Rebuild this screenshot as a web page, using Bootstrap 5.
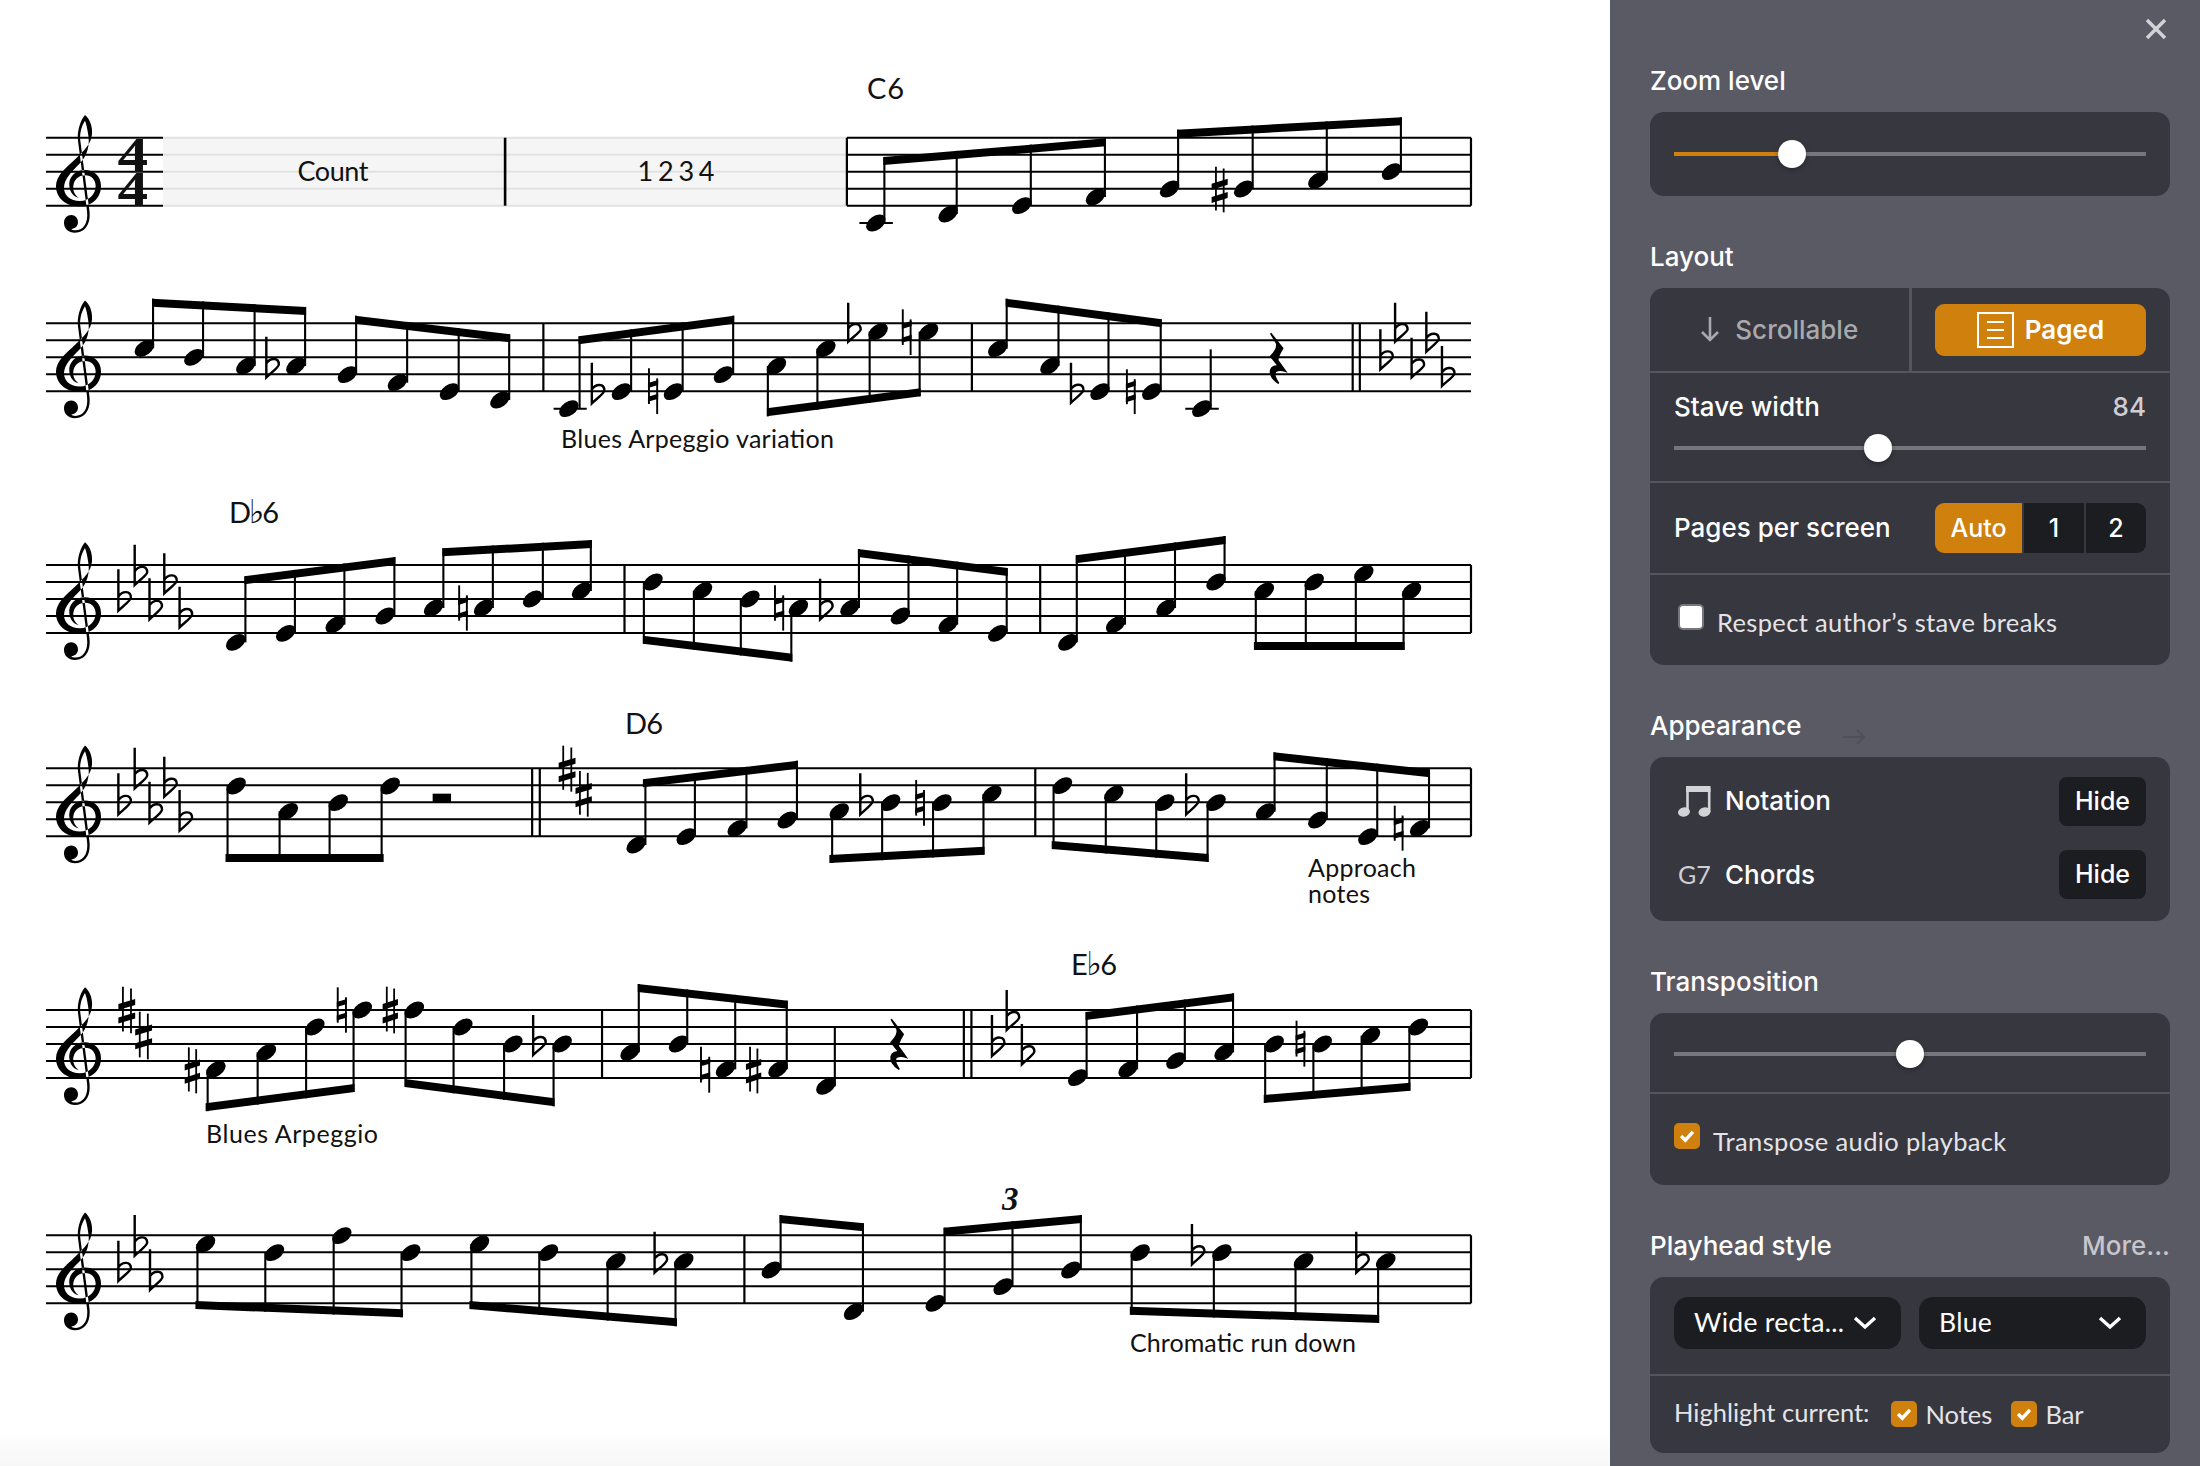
<!DOCTYPE html>
<html lang="en">
<head>
<meta charset="utf-8">
<title>Score settings</title>
<link href="https://cdn.jsdelivr.net/npm/bootstrap@5.3.0/dist/css/bootstrap.min.css" rel="stylesheet">
<style>
html,body{margin:0;background:#fff;font-family:"Lato","Liberation Sans",sans-serif;overflow:hidden}
.app-shell{width:2200px;height:1466px}
.score-pane{width:1610px;height:1466px;flex:none;background:linear-gradient(to bottom,#fff 1430px,#f7f7f7 1466px)}
.score-pane svg{display:block}
.score-pane text{font-family:"Lato","Liberation Sans",sans-serif;fill:#111}
.side-pane{width:590px;height:1466px;flex:none;background:#5a5a65;padding:0 30px 0 40px;color:#fff}
.close-row{height:66px;padding-top:18px}
.close-mark{margin-right:3px}
.sect-title{font-family:"Inter","Lato",sans-serif;font-size:26px;line-height:30px;font-weight:500;color:#fff;margin:46px 0 16px}
.first-title{margin-top:0}
.panel-card{background:#373740;border-radius:14px;overflow:hidden}
.card-row{border-bottom:2px solid #55555e;padding:0 24px}
.card-row:last-child{border-bottom:0}
.h-84{height:83.5px}
.form-range{height:28px;display:block}
.form-range::-webkit-slider-runnable-track{height:4px;background:linear-gradient(to right,#d0800c var(--fill,0%),#76767b var(--fill,0%));border-radius:0}
.form-range::-webkit-slider-thumb{width:28px;height:28px;margin-top:-12px;background:#fff;border-radius:50%;box-shadow:0 2px 5px rgba(0,0,0,.3);-webkit-appearance:none;appearance:none}
.mode-row{height:85px;padding:0}
.mode-left{width:261.5px;height:100%;border-right:3px solid #55555e;color:#a9a9ad;font-family:"Inter","Lato",sans-serif;font-size:26px;font-weight:500;gap:15px}
.mode-right{padding:16px 24px 0 23.5px;flex:1}
.btn-amber{background:#d0800c;color:#fff;border:0;font-family:"Inter","Lato",sans-serif;font-size:26px;font-weight:600;height:52px;border-radius:9px;padding:0;gap:11px}
.btn-amber:hover{background:#d0800c;color:#fff}
.stave-row{height:110px;padding-top:19px}
.row-label{font-family:"Inter","Lato",sans-serif;font-size:26px;line-height:30px;font-weight:500;color:#fff}
.row-val{color:#cfcfd3}
.stave-row .form-range{margin-top:12px}
.pages-row{height:92px}
.seg-group{width:211px;height:50px}
.seg-group .btn{background:#1c1d20;color:#fff;border:0;border-radius:0;font-family:"Inter","Lato",sans-serif;font-size:25px;font-weight:500;padding:0;line-height:50px;height:50px;width:60px;flex:none}
.seg-group.btn-group .btn+.btn{margin-left:2px}
.seg-group .btn:first-child{background:#d0800c;width:87px;border-radius:9px 0 0 9px}
.seg-group.btn-group .btn:last-child{border-radius:0 9px 9px 0}
.check-row{gap:13px;color:#e4e4e7;font-size:25.5px;line-height:30px;letter-spacing:.35px}
.form-check-input.tick-box{width:26px;height:26px;margin:0;flex:none;background-color:#fff;border:2px solid #76767b;border-radius:5px;float:none}
.form-check-input.tick-box:checked{background-color:#d0800c;border-color:#d0800c;background-image:url("data:image/svg+xml,%3csvg xmlns='http://www.w3.org/2000/svg' viewBox='0 0 26 26'%3e%3cpath fill='none' stroke='%23fff' stroke-width='4' d='M6 13l5 5 9-10'/%3e%3c/svg%3e")}
.check-row .tick-box{margin-bottom:6px!important}
.check-row span{margin-top:4px}
.row-one-a{height:90px;padding:0 0 0 28px}
.appear-list{padding:8px 0 9px}
.app-row{height:73.5px;border:0;padding:0 24px 0 28px}
.app-glyph{width:47px;flex:none;color:#cfcfd3;font-size:25px}
.btn-ink{background:#1c1d20;color:#fff;border:0;font-family:"Inter","Lato",sans-serif;font-size:25px;font-weight:500;width:87px;height:49px;border-radius:8px;padding:0}
.btn-ink:hover{background:#1c1d20;color:#fff}
.more-link{color:#c6c6cb;font-family:"Inter","Lato",sans-serif;font-size:26px;line-height:30px;font-weight:500;margin-top:46px}
.pick-btn{background:#1c1d20;color:#fff;border:0;border-radius:14px;height:52px;font-size:26.5px;letter-spacing:.3px;padding:0 24px 0 20px;text-align:left}
.pick-btn:hover{background:#1c1d20;color:#fff}
.light-arrow{margin:0 0 12px 40px}
.transp-top{height:81.5px;padding-top:3px}
.transp-bot{height:90.5px}
.play-top{height:99px;padding-top:20px;gap:18px}
.play-bot{height:77.5px;font-size:25.5px;color:#e4e4e7}
.gap-label{margin:-5px 22px 0 0}
.tick-label{margin-left:8px}
.tick-space{margin-right:19px}
</style>
</head>
<body>
<div class="app-shell d-flex">
  <main class="score-pane">
    <svg id="score" width="1610" height="1466" viewBox="0 0 1610 1466" xmlns="http://www.w3.org/2000/svg">
      <g id="music"></g>
      <text x="333" y="181" text-anchor="middle" font-size="27" textLength="71" lengthAdjust="spacing">Count</text>
      <text x="676" y="181" text-anchor="middle" font-size="27" textLength="77" lengthAdjust="spacing">1 2 3 4</text>
      <text x="867" y="99" font-size="29" textLength="37" lengthAdjust="spacing">C6</text>
      <text x="229" y="523" font-size="29" textLength="50" lengthAdjust="spacing">D<tspan font-size="33" style="font-family:'DejaVu Sans',sans-serif">♭</tspan>6</text>
      <text x="625" y="734" font-size="29" textLength="38" lengthAdjust="spacing">D6</text>
      <text x="1071" y="975" font-size="29" textLength="46" lengthAdjust="spacing">E<tspan font-size="33" style="font-family:'DejaVu Sans',sans-serif">♭</tspan>6</text>
      <text x="561" y="448" font-size="25" textLength="273" lengthAdjust="spacing">Blues Arpeggio variation</text>
      <text x="1308" y="877" font-size="25" textLength="108" lengthAdjust="spacing">Approach</text>
      <text x="1308" y="903" font-size="25" textLength="62" lengthAdjust="spacing">notes</text>
      <text x="206" y="1143" font-size="25" textLength="172" lengthAdjust="spacing">Blues Arpeggio</text>
      <text x="1130" y="1352" font-size="25" textLength="226" lengthAdjust="spacing">Chromatic run down</text>
      <text x="1002" y="1210" font-size="33" font-weight="700" font-style="italic" style="font-family:'Liberation Serif',serif">3</text>
      <text transform="translate(117.5 171.5) scale(1.2 1)" font-size="51" font-weight="700" style="font-family:'Liberation Serif',serif">4</text>
      <text transform="translate(117.5 205.5) scale(1.2 1)" font-size="51" font-weight="700" style="font-family:'Liberation Serif',serif">4</text>
    </svg>
  </main>
  <aside class="side-pane">
    <div class="close-row d-flex justify-content-end">
      <svg class="close-mark" width="22" height="22" viewBox="0 0 22 22"><path d="M2 2 L20 20 M20 2 L2 20" stroke="#d3d3d7" stroke-width="3.4" fill="none"/></svg>
    </div>

    <h2 class="sect-title first-title">Zoom level</h2>
    <div class="panel-card">
      <div class="card-row h-84 d-flex align-items-center">
        <input type="range" class="form-range" min="0" max="100" step="any" value="23.4" style="--fill:25%" aria-label="Zoom level">
      </div>
    </div>

    <h2 class="sect-title">Layout</h2>
    <div class="panel-card">
      <div class="card-row mode-row d-flex">
        <div class="mode-left d-flex align-items-center justify-content-center">
          <svg width="20" height="26" viewBox="0 0 20 26"><path d="M10 1 V24 M2 16 L10 24 L18 16" stroke="#a9a9ad" stroke-width="2.6" fill="none"/></svg>
          <span>Scrollable</span>
        </div>
        <div class="mode-right">
          <button type="button" class="btn btn-amber w-100 d-flex align-items-center justify-content-center">
            <svg width="37" height="36" viewBox="0 0 37 36"><rect x="1" y="1" width="35" height="34" fill="none" stroke="#fff" stroke-width="2"/><path d="M10 10 H27 M10 18 H27 M10 26 H27" stroke="#fff" stroke-width="1.8"/></svg>
            <span>Paged</span>
          </button>
        </div>
      </div>
      <div class="card-row stave-row">
        <div class="d-flex justify-content-between row-label"><span>Stave width</span><span class="row-val">84</span></div>
        <input type="range" class="form-range" min="0" max="100" step="any" value="42.8" aria-label="Stave width">
      </div>
      <div class="card-row pages-row d-flex align-items-center justify-content-between">
        <span class="row-label">Pages per screen</span>
        <div class="btn-group seg-group" role="group">
          <button type="button" class="btn">Auto</button>
          <button type="button" class="btn">1</button>
          <button type="button" class="btn">2</button>
        </div>
      </div>
      <div class="card-row row-one-a d-flex align-items-center check-row">
        <input class="form-check-input tick-box" type="checkbox" aria-label="Respect author's stave breaks">
        <span>Respect author’s stave breaks</span>
      </div>
    </div>

    <div class="d-flex">
      <h2 class="sect-title">Appearance</h2>
      <svg class="light-arrow align-self-end" width="24" height="16" viewBox="0 0 24 16"><path d="M1 8 H22 M15 1 L22 8 L15 15" stroke="#4f4f5a" stroke-width="1.8" fill="none"/></svg>
    </div>
    <div class="panel-card appear-list">
      <div class="app-row card-row d-flex align-items-center justify-content-between">
        <div class="d-flex align-items-center">
          <span class="app-glyph d-flex"><svg width="33" height="31" viewBox="0 0 33 31"><path d="M8 0 H32.5 V6 H8Z" fill="#d3d3d7"/><path d="M9.5 2 V26 M31.2 2 V26" stroke="#d3d3d7" stroke-width="2.6"/><ellipse cx="6" cy="26" rx="6" ry="4.6" fill="#d3d3d7" transform="rotate(-12 6 26)"/><ellipse cx="26.5" cy="26" rx="6" ry="4.6" fill="#d3d3d7" transform="rotate(-12 26.5 26)"/></svg></span>
          <span class="row-label">Notation</span>
        </div>
        <button type="button" class="btn btn-ink">Hide</button>
      </div>
      <div class="app-row card-row d-flex align-items-center justify-content-between">
        <div class="d-flex align-items-center">
          <span class="app-glyph">G7</span>
          <span class="row-label">Chords</span>
        </div>
        <button type="button" class="btn btn-ink">Hide</button>
      </div>
    </div>

    <h2 class="sect-title">Transposition</h2>
    <div class="panel-card">
      <div class="card-row transp-top d-flex align-items-center">
        <input type="range" class="form-range" min="0" max="100" step="any" value="50" aria-label="Transposition">
      </div>
      <div class="card-row transp-bot d-flex align-items-center check-row">
        <input class="form-check-input tick-box" type="checkbox" checked aria-label="Transpose audio playback">
        <span>Transpose audio playback</span>
      </div>
    </div>

    <div class="d-flex justify-content-between align-items-start">
      <h2 class="sect-title">Playhead style</h2>
      <a class="more-link text-decoration-none">More...</a>
    </div>
    <div class="panel-card">
      <div class="card-row play-top d-flex">
        <button type="button" class="btn pick-btn d-flex align-items-center justify-content-between" style="width:227px"><span>Wide recta...</span><svg width="24" height="14" viewBox="0 0 24 14"><path d="M2 2 L12 11 L22 2" stroke="#fff" stroke-width="3.4" fill="none"/></svg></button>
        <button type="button" class="btn pick-btn d-flex align-items-center justify-content-between flex-grow-1"><span>Blue</span><svg width="24" height="14" viewBox="0 0 24 14"><path d="M2 2 L12 11 L22 2" stroke="#fff" stroke-width="3.4" fill="none"/></svg></button>
      </div>
      <div class="card-row play-bot d-flex align-items-center">
        <span class="gap-label">Highlight current:</span>
        <input class="form-check-input tick-box" type="checkbox" checked aria-label="Notes"><span class="tick-label tick-space">Notes</span>
        <input class="form-check-input tick-box" type="checkbox" checked aria-label="Bar"><span class="tick-label">Bar</span>
      </div>
    </div>
  </aside>
</div>
<script src="https://cdn.jsdelivr.net/npm/bootstrap@5.3.0/dist/js/bootstrap.bundle.min.js"></script>
<script>
(function(){
  const a=x=>x/1.96, b=x=>800+x/2.24;
  const yA=y=>60+y/3, yC=y=>480+y/3, yE=y=>930+y/3;
  let o='';
  const line=(x1,y1,x2,y2,w,c)=>{o+=`<line x1="${x1}" y1="${y1}" x2="${x2}" y2="${y2}" stroke="${c||'#000'}" stroke-width="${w||2}"/>`};
  const head=(x,y)=>{o+=`<ellipse cx="${x}" cy="${y}" rx="10.9" ry="6.9" transform="rotate(-35 ${x} ${y})"/>`};
  const ledger=(x1,x2,y)=>line(x1,y,x2,y,2);
  const bar=(x,t,w)=>line(x,t,x,t+68,w||2.2);
  const CLEF='M165 45 C178 56 188 76 186 102 C184 132 162 152 137 176 C107 205 78 226 78 258 C78 296 110 319 148 319 C190 319 213 291 213 258 C213 226 189 210 165 210 C135 210 115 232 118 258 C120 278 132 291 146 293 C132 284 127 268 131 252 C135 236 150 226 165 226 C185 226 197 240 197 258 C197 282 178 303 150 303 C120 303 102 285 102 263 C102 237 126 214 150 190 C172 168 181 135 174 100 C172 86 169 72 165 62 C160 70 154 82 152 95 C150 104 150 112 151 122 L178 330 C184 372 165 398 135 398 C115 398 102 385 102 368 C102 354 112 345 124 345 C135 345 144 354 144 366 C144 378 135 386 124 387 C126 390 131 391 136 391 C158 391 176 372 171 332 L144 122 C143 112 143 102 145 92 C148 74 156 55 165 45Z';
  const clef=t=>{o+=`<path d="${CLEF}" transform="translate(30 ${t-37.7}) scale(.3333)"/>`};
  const flat=(x,y1,y2)=>{const h=y2-y1,m=y1+h*.56;o+=`<path d="M${x} ${y1} V${y2} C${x+4} ${y2-4} ${x+12.5} ${y2-10} ${x+12.5} ${m+5} C${x+12.5} ${m-2} ${x+4} ${m-2} ${x} ${m+4}" fill="none" stroke="#000" stroke-width="2.4"/>`};
  const sharp=(x1,x2,y1,y2)=>{const w=x2-x1,h=y2-y1;line(x1+w*.27,y1,x1+w*.27,y2-h*.04,1.8);line(x1+w*.75,y1+h*.04,x1+w*.75,y2,1.8);
    [.33,.62].forEach(f=>{const y=y1+h*f;o+=`<polygon points="${x1},${y+2} ${x2},${y-3} ${x2},${y+3} ${x1},${y+8}"/>`})};
  const natural=(x1,x2,y1,y2)=>{const h=y2-y1;line(x1+1,y1,x1+1,y1+h*.78,1.9);line(x2-1,y1+h*.22,x2-1,y2,1.9);
    [.3,.6].forEach(f=>{const y=y1+h*f;o+=`<polygon points="${x1},${y+1} ${x2},${y-2} ${x2},${y+3} ${x1},${y+6}"/>`})};
  const rest=(x,y)=>{o+=`<path stroke="#000" stroke-width="1.6" transform="translate(${x} ${y})" d="M1 0 L13 15 C10 20 8 24 8 27 L16 38 C10 36 5 37 5 41 C5 44 7 47 9 50 C3 46 0 42 1 37 C2 33 6 32 9 33 L1 23 C5 19 8 14 7 10Z"/>`};
  const G=(heads,stems,bm)=>{
    const th=8,s=(bm[3]-bm[1])/(bm[2]-bm[0]);
    heads.forEach((h,i)=>{const x=stems[i],by=bm[1]+s*(x-bm[0]);
      const up=by<h[1];line(x,h[1],x,up?by:by+th,2.1);head(h[0],h[1])});
    o+=`<polygon points="${bm[0]-1},${bm[1]} ${bm[2]+1},${bm[3]} ${bm[2]+1},${bm[3]+th} ${bm[0]-1},${bm[1]+th}"/>`;
  };
  const g=(fx,fy,hs,st,bm)=>G(hs.map(h=>[fx(h[0]),fy(h[1])]),st.map(fx),[fx(bm[0]),fy(bm[1]),fx(bm[2]),fy(bm[3])]);
  const tops=[137.7,323.3,565,768.3,1010,1235.3];
  const X0=46,X1=1471;
  {const t=tops[0];
   o+=`<rect x="163" y="${t}" width="684" height="68" fill="#f5f5f5"/>`;
   for(let i=0;i<5;i++){const y=t+i*17;line(X0,y,163,y);line(163,y,847,y,2,'#e2e2e2');line(847,y,X1,y)}
  }
  for(let k=1;k<6;k++){for(let i=0;i<5;i++){const y=tops[k]+i*17;line(X0,y,X1,y)}}
  tops.forEach(clef);
  const fl=(f,fy,arr)=>arr.forEach(v=>flat(f(v[0]),fy(v[1]),fy(v[2])));
  const sh=(f,fy,arr)=>arr.forEach(v=>sharp(f(v[0]),f(v[1]),fy(v[2]),fy(v[3])));
  const na=(f,fy,arr)=>arr.forEach(v=>natural(f(v[0]),f(v[1]),fy(v[2]),fy(v[3])));
  bar(a(990),tops[0],2.6);bar(b(105),tops[0]);bar(b(1503),tops[0]);
  ledger(b(133),b(208),yA(489));
  g(b,yA,[[170,489],[332,462],[497,437],[662,411]],[189,351,517,683],[189,291,683,235]);
  g(b,yA,[[828,387],[994,387],[1160,361],[1325,335]],[847,1014,1180,1346],[847,209,1346,172]);
  sh(b,yA,[[922,958,320,457]]);
  g(a,yA,[[283,865],[380,892],[482,918],[580,918]],[300,398,499,598],[300,716,598,741]);
  fl(a,yA,[[522,830,952]]);
  g(a,yA,[[681,944],[779,968],[881,995],[980,1020]],[698,798,899,998],[698,767,998,823]);
  bar(a(1065),tops[1]);
  ledger(a(1085),a(1150),yA(1046));
  g(a,yA,[[1115,1046],[1218,995],[1320,995],[1418,944]],[1136,1237,1338,1437],[1136,829,1437,767]);
  fl(a,yA,[[1160,908,1030]]);na(a,yA,[[1270,1290,925,1062]]);
  G([[a(1522),yA(918)],[b(58),yA(866)],[b(175),yA(815)],[b(288),yA(815)]],[a(1505),b(39),b(156),b(268)],[a(1505),yA(1045),b(268),yA(985)]);
  fl(b,yA,[[108,728,845]]);na(b,yA,[[228,250,748,885]]);
  bar(b(385),tops[1]);
  g(b,yA,[[443,866],[560,918],[672,995],[788,995]],[463,579,691,808],[463,716,808,778]);
  fl(b,yA,[[607,908,1028]]);na(b,yA,[[730,752,928,1062]]);
  ledger(b(863),b(938),yA(1046));
  line(b(920),yA(868),b(920),yA(1046),2.1);head(b(900),yA(1046));
  rest(b(1052),yA(820));
  bar(b(1238),tops[1]);bar(b(1254),tops[1]);
  fl(b,yA,[[1300,808,928],[1333,728,845],[1370,833,952],[1403,755,875],[1438,858,978]]);
  fl(a,yC,[[232,268,392],[264,194,315],[293,295,418],[322,220,340],[352,320,442]]);
  g(a,yC,[[462,487],[560,460],[657,434],[755,408]],[481,578,675,773],[481,289,773,231]);
  g(a,yC,[[850,384],[948,384],[1044,357],[1140,333]],[869,966,1064,1158],[869,205,1158,180]);
  na(a,yC,[[898,917,316,452]]);
  bar(a(1224),tops[2]);
  g(a,yC,[[1280,306],[1377,332],[1470,357],[1565,384]],[1262,1360,1452,1551],[1262,467,1551,521]);
  na(a,yC,[[1517,1537,316,452]]);
  g(b,yC,[[112,384],[225,408],[332,434],[443,460]],[132,243,352,463],[132,207,463,264]);
  fl(b,yC,[[45,296,418]]);
  bar(b(538),tops[2]);
  g(b,yC,[[600,487],[707,434],[820,384],[932,306]],[620,728,840,951],[620,226,951,168]);
  g(b,yC,[[1040,333],[1152,306],[1263,281],[1370,333]],[1021,1133,1245,1352],[1019,486,1352,486]);
  bar(b(1503),tops[2]);
  fl(a,yC,[[232,880,1003],[264,803,925],[293,905,1028],[322,830,950],[352,930,1052]]);
  g(a,yC,[[463,918],[565,994],[663,968],[765,918]],[446,548,646,748],[444,1122,750,1122]);
  o+=`<rect x="${a(848)}" y="${yC(941)}" width="18.4" height="9" />`;
  bar(a(1043),tops[3]);bar(a(1058),tops[3]);
  sh(a,yC,[[1095,1128,797,935],[1128,1160,873,1010]]);
  g(a,yC,[[1247,1095],[1345,1070],[1445,1045],[1543,1020]],[1265,1362,1463,1562],[1262,898,1562,842]);
  g(b,yC,[[88,995],[203,968],[318,968],[430,942]],[72,184,298,411],[68,1125,411,1100]);
  fl(b,yC,[[135,880,1003]]);na(b,yC,[[258,280,900,1037]]);
  bar(b(527),tops[3]);
  g(b,yC,[[588,917],[703,942],[817,968],[932,968]],[568,685,798,913],[566,1083,913,1122]);
  fl(b,yC,[[865,880,1003]]);
  g(b,yC,[[1043,995],[1160,1020],[1272,1070],[1388,1045]],[1063,1180,1293,1409],[1063,817,1409,868]);
  na(b,yC,[[1330,1352,977,1112]]);
  bar(b(1503),tops[3]);
  sh(a,yE,[[232,265,170,310],[265,298,245,388],[362,392,352,490],[750,780,170,310],[1462,1492,350,490]]);
  g(a,yE,[[423,418],[522,367],[617,291],[710,240]],[407,505,600,693],[405,520,693,462]);
  na(a,yE,[[660,680,172,308],[1372,1392,350,488]]);
  g(a,yE,[[812,240],[907,291],[1005,342],[1102,342]],[795,889,988,1085],[795,447,1085,505]);
  fl(a,yE,[[1045,255,375]]);
  bar(a(1180),tops[4]);
  g(a,yE,[[1235,367],[1330,342],[1422,418],[1525,418]],[1252,1347,1441,1542],[1252,162,1542,212]);
  line(b(78),yE(293),b(78),yE(469),2.1);head(b(58),yE(469));
  rest(b(202),yE(268));
  bar(b(367),tops[4]);bar(b(384),tops[4]);
  fl(b,yE,[[430,255,378],[463,180,300],[497,282,403]]);
  g(b,yE,[[622,443],[735,418],[842,392],[950,367]],[642,755,862,970],[642,246,970,190]);
  g(b,yE,[[1062,342],[1170,342],[1278,317],[1385,291]],[1042,1150,1258,1365],[1041,495,1365,458]);
  na(b,yE,[[1110,1132,272,410]]);
  bar(b(1503),tops[4]);
  fl(a,yE,[[232,932,1053],[264,855,977],[294,958,1080]]);
  g(a,yE,[[403,942],[538,968],[670,917],[805,968]],[387,520,654,787],[385,1113,788,1138]);
  g(a,yE,[[940,942],[1075,968],[1207,994],[1340,994]],[924,1057,1191,1324],[922,1113,1325,1165]);
  fl(a,yE,[[1283,905,1028]]);
  bar(a(1459),tops[5]);
  G([[a(1512),yE(1020)],[b(120),yE(1145)]],[a(1530),b(141)],[a(1530),yE(855),b(141),yE(880)]);
  g(b,yE,[[303,1120],[455,1070],[607,1020]],[324,476,629],[324,893,629,855]);
  g(b,yE,[[762,968],[945,968],[1128,994],[1312,994]],[743,927,1110,1295],[741,1130,1295,1155]);
  fl(b,yE,[[878,882,1003],[1246,905,1028]]);
  bar(b(1503),tops[5]);
  document.getElementById('music').innerHTML=o;
})();
</script>
</body>
</html>
